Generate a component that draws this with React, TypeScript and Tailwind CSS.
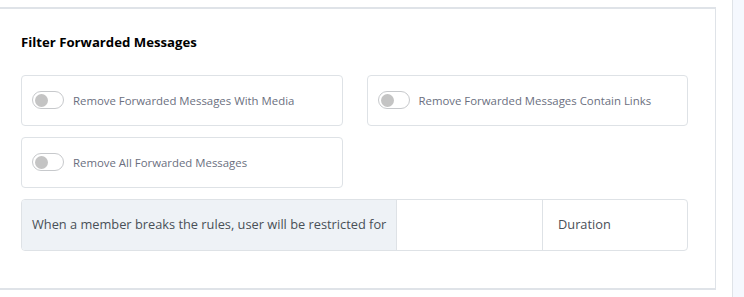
import React from 'react';

const toggles = [
    "Remove Forwarded Messages With Media",
    "Remove Forwarded Messages Contain Links",
    "Remove All Forwarded Messages",
];

const Toggle = ({ label }: { label: string }) => (
    <div className="flex h-[51px] items-center gap-[9px] rounded-[4px] border border-[#dee2e6] bg-white px-[10px]">
        <span className="flex h-[18px] w-[32px] items-center rounded-full border border-[#c7c9cc] bg-white px-[2px]">
            <span className="h-[13px] w-[13px] rounded-full bg-[#c4c4c4]" />
        </span>
        <span className="text-[11.4px] text-[#6b6f80]">{label}</span>
    </div>
);

export default function App() {
    return (
        <div className="flex h-[297px] w-[744px] bg-white font-['Open_Sans',sans-serif]">
            <div className="w-[716px] pt-[7px]">
                <div className="h-[283px] border-y-2 border-r border-[#dfe3e8] px-[21px] pt-[24px]">
                    <h2 className="text-[13.2px] font-bold text-black">Filter Forwarded Messages</h2>
                    <div className="mt-[22px] grid grid-cols-2 gap-x-[24px] gap-y-[11px] pr-[6px]">
                        {toggles.map((t) => (
                            <Toggle key={t} label={t} />
                        ))}
                    </div>
                    <div className="mt-[11px] mr-[6px] flex h-[52px] overflow-hidden rounded-[4px] border border-[#dee2e6] text-[12.8px] text-[#495057]">
                        <div className="flex w-[375px] items-center whitespace-nowrap border-r border-[#dee2e6] bg-[#eef2f6] px-[10px]">
                            When a member breaks the rules, user will be restricted for
                        </div>
                        <div className="w-[146px] border-r border-[#dee2e6]" />
                        <div className="flex flex-1 items-center px-[15px]">Duration</div>
                    </div>
                </div>
            </div>
            <div className="ml-[16px] flex-1 border-l border-[#dfe3e8] bg-[#f5f8fe]" />
        </div>
    );
}
